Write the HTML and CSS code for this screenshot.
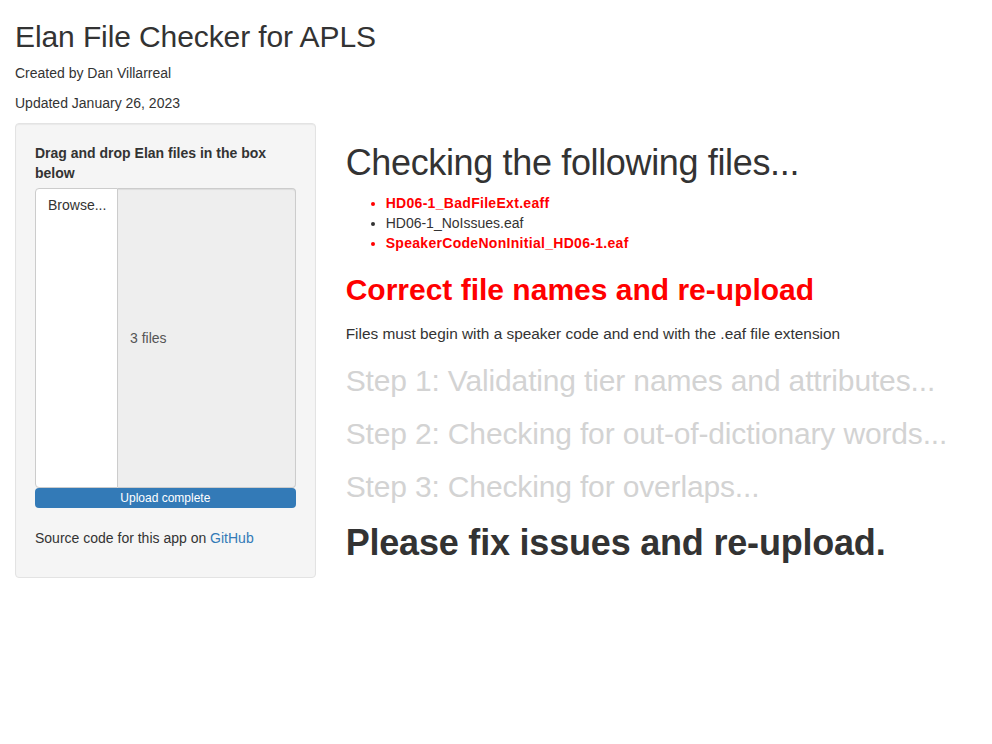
FILE: index.html
```html
<!DOCTYPE html>
<html>
<head>
<meta charset="utf-8">
<title>Elan File Checker for APLS</title>
<link rel="stylesheet" href="styles.css">
</head>
<body>
<div class="container">
  <h2 class="title">Elan File Checker for APLS</h2>
  <p>Created by Dan Villarreal</p>
  <p>Updated January 26, 2023</p>
  <div class="row">
    <div class="col-side">
      <div class="well">
        <div class="form-group">
          <label class="ctl-label">Drag and drop Elan files in the box below</label>
          <div class="input-group">
            <span class="btn-file">Browse...</span>
            <div class="file-field"><span>3 files</span></div>
          </div>
          <div class="progress"><div class="progress-bar">Upload complete</div></div>
        </div>
        <p>Source code for this app on <a href="#">GitHub</a></p>
      </div>
    </div>
    <div class="col-main">
      <h1 class="checking">Checking the following files...</h1>
      <ul class="files">
        <li class="bad">HD06-1_BadFileExt.eaff</li>
        <li>HD06-1_NoIssues.eaf</li>
        <li class="bad">SpeakerCodeNonInitial_HD06-1.eaf</li>
      </ul>
      <h2 class="err">Correct file names and re-upload</h2>
      <p class="note">Files must begin with a speaker code and end with the .eaf file extension</p>
      <h2 class="step">Step 1: Validating tier names and attributes...</h2>
      <h2 class="step">Step 2: Checking for out-of-dictionary words...</h2>
      <h2 class="step">Step 3: Checking for overlaps...</h2>
      <h1 class="final">Please fix issues and re-upload.</h1>
    </div>
  </div>
</div>
</body>
</html>
```
FILE: styles.css
```css
html, body {
  margin: 0;
  padding: 0;
}
body {
  font-family: "Liberation Sans", Arial, Helvetica, sans-serif;
  font-size: 14px;
  line-height: 20px;
  color: #333;
  background: #fff;
}
.container {
  padding: 0 15px;
}
p {
  margin: 0 0 10px;
}
h1, h2 {
  font-weight: 500;
  line-height: 1.1;
  margin: 20px 0 10px;
}
h1 { font-size: 36px; }
h2 { font-size: 30px; }
.title {
  letter-spacing: -0.1px;
}
.row {
  display: flex;
  margin: 0 -15px;
}
.col-side {
  width: 33.3333%;
  padding: 0 15px;
  box-sizing: border-box;
}
.col-main {
  width: 66.6667%;
  padding: 0 15px;
  box-sizing: border-box;
}
.well {
  background: #f5f5f5;
  border: 1px solid #e3e3e3;
  border-radius: 4px;
  box-shadow: inset 0 1px 1px rgba(0,0,0,.05);
  padding: 19px;
  margin-bottom: 20px;
}
.form-group {
  margin-bottom: 20px;
}
.ctl-label {
  display: inline-block;
  font-weight: bold;
  margin-bottom: 5px;
}
.input-group {
  display: flex;
  height: 300px;
}
.btn-file {
  width: 83px;
  box-sizing: border-box;
  background: #fff;
  border: 1px solid #ccc;
  border-radius: 4px 0 0 4px;
  padding: 6px 12px;
  text-align: center;
  color: #333;
}
.file-field {
  flex: 1;
  display: flex;
  align-items: center;
  background: #eee;
  border: 1px solid #ccc;
  border-left: none;
  border-radius: 0 4px 4px 0;
  padding: 0 12px;
  color: #555;
  box-shadow: inset 0 1px 1px rgba(0,0,0,.075);
}
.progress {
  height: 20px;
  background: #f5f5f5;
  border-radius: 4px;
  overflow: hidden;
}
.progress-bar {
  width: 100%;
  height: 20px;
  background: #337ab7;
  color: #fff;
  font-size: 12px;
  line-height: 20px;
  text-align: center;
}
a {
  color: #337ab7;
  text-decoration: none;
}
.checking {
  letter-spacing: -0.35px;
}
.files {
  margin: 0 0 10px;
  padding-left: 40px;
}
.files .bad {
  color: #ff0000;
  font-weight: bold;
  letter-spacing: 0.3px;
}
.err {
  color: #ff0000;
  font-weight: bold;
}
.note {
  margin-top: 18px;
  font-size: 15.4px;
}
.step {
  color: #d3d3d3;
  letter-spacing: -0.15px;
}
.final {
  font-weight: bold;
  letter-spacing: -0.2px;
}
```
